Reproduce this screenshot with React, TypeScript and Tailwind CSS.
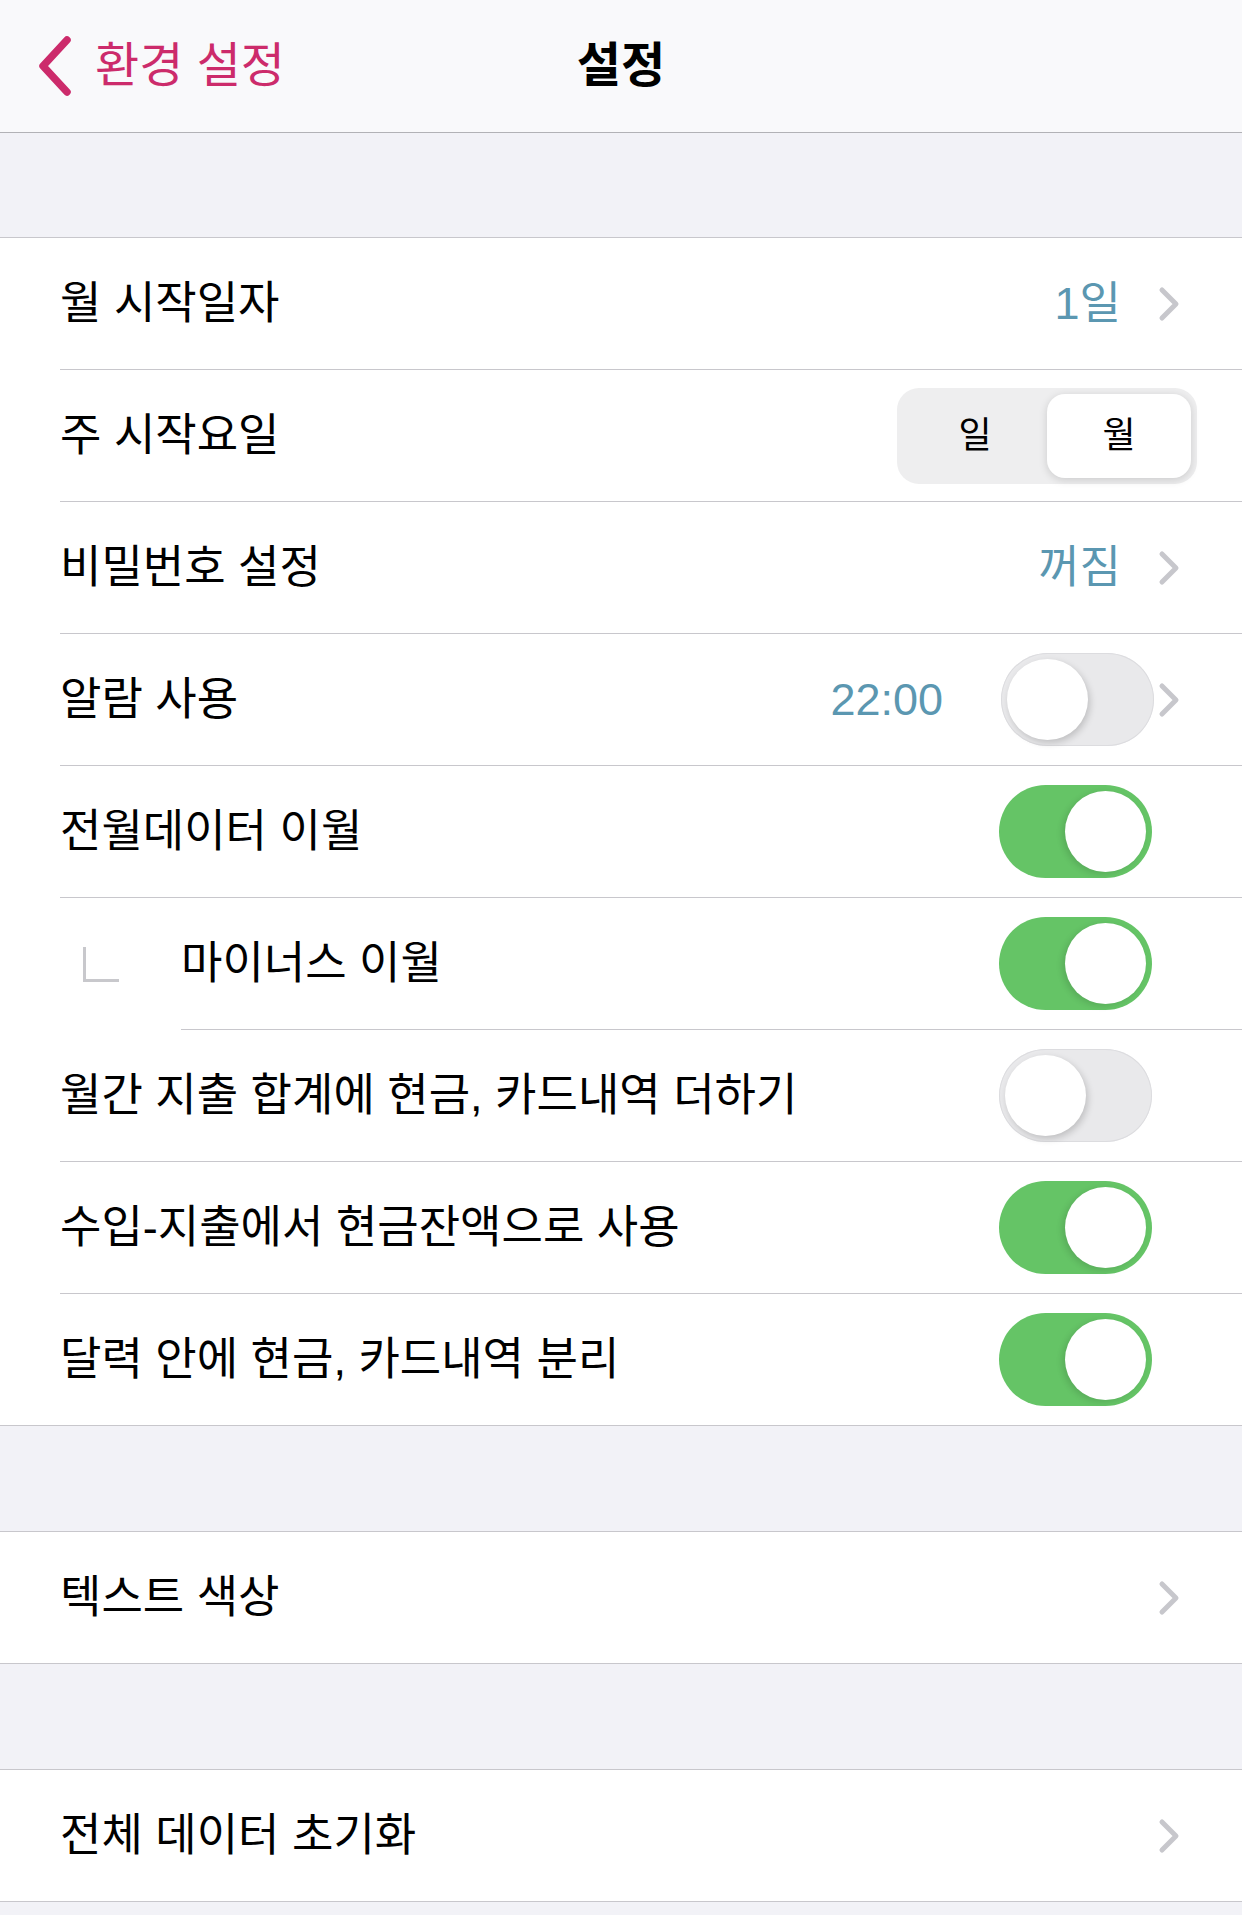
import React from 'react';

const FONT = { fontFamily: '"Liberation Sans", "Noto Sans CJK KR", sans-serif' };

const Chevron = () => (
	<svg width="22" height="36" viewBox="0 0 22 36" className="shrink-0">
		<path d="M4 4 L18 18 L4 32" fill="none" stroke="#c7c7cc" strokeWidth="5" strokeLinecap="round" strokeLinejoin="round" />
	</svg>
);

const Toggle = ({ on }: { on: boolean }) =>
	on ? (
		<div className="w-[153px] h-[93px] rounded-full bg-[#65c466] p-[6px] flex justify-end shrink-0">
			<div className="w-[81px] h-[81px] rounded-full bg-white shadow-[-3px_2px_6px_rgba(0,0,0,0.12)]" />
		</div>
	) : (
		<div className="w-[153px] h-[93px] rounded-full bg-[#e9e9eb] ring-1 ring-inset ring-[#dcdcdf] p-[6px] flex shrink-0">
			<div className="w-[81px] h-[81px] rounded-full bg-white shadow-[2px_3px_7px_rgba(0,0,0,0.18)]" />
		</div>
	);

const Value = ({ children }: { children: React.ReactNode }) => (
	<span className="text-[45px] text-[#5b97b1] leading-none">{children}</span>
);

interface RowProps {
	label: string;
	right?: React.ReactNode;
	last?: boolean;
	pr?: string;
}

const Row = ({ label, right, last, pr = 'pr-[62px]' }: RowProps) => (
	<div className="pl-[60px] bg-white">
		<div className={`flex items-center ${pr} ${last ? 'h-[131px]' : 'h-[132px] border-b border-[#c8c7cc]'}`}>
			<span className="flex-1 text-[45px] text-black leading-none">{label}</span>
			{right}
		</div>
	</div>
);

const Segmented = () => (
	<div className="w-[300px] h-[96px] rounded-[22px] bg-[#eeeeef] p-[6px] flex">
		<div className="flex-1 flex items-center justify-center text-[36px] text-black">일</div>
		<div className="flex-1 flex items-center justify-center text-[36px] text-black bg-white rounded-[18px] shadow-[0_2px_8px_rgba(0,0,0,0.15)]">
			월
		</div>
	</div>
);

export default function App() {
	return (
		<div className="w-[1242px] h-[1915px] bg-[#f2f2f7] overflow-hidden" style={FONT}>
			{/* nav bar */}
			<div className="h-[133px] bg-[#f9f9fb] border-b border-[#b2b2b6] grid grid-cols-3 items-center">
				<div className="flex items-center pl-[37px]">
					<svg width="36" height="60" viewBox="0 0 36 60">
						<path d="M30 4 L6 30 L30 56" fill="none" stroke="#cc2b6b" strokeWidth="7.5" strokeLinecap="round" strokeLinejoin="round" />
					</svg>
					<span className="ml-[22px] text-[48px] text-[#cc2b6b] leading-none">환경 설정</span>
				</div>
				<div className="text-center text-[48px] font-bold text-black leading-none">설정</div>
				<div />
			</div>

			<div className="h-[104px]" />

			<div className="border-y border-[#c8c7cc] bg-white">
				<Row
					label="월 시작일자"
					right={
						<div className="flex items-center gap-[37px]">
							<Value>1일</Value>
							<Chevron />
						</div>
					}
				/>
				<Row label="주 시작요일" pr="pr-[45px]" right={<Segmented />} />
				<Row
					label="비밀번호 설정"
					right={
						<div className="flex items-center gap-[37px]">
							<Value>꺼짐</Value>
							<Chevron />
						</div>
					}
				/>
				<Row
					label="알람 사용"
					right={
						<div className="flex items-center">
							<Value>22:00</Value>
							<div className="ml-[58px] mr-[4px]">
								<Toggle on={false} />
							</div>
							<Chevron />
						</div>
					}
				/>
				<Row label="전월데이터 이월" pr="pr-[90px]" right={<Toggle on />} />
				<div className="flex bg-white pl-[83px]">
					<div className="flex items-center h-[132px] w-[36px]">
						<div className="w-[36px] h-[35px] border-l-[3px] border-b-[3px] border-[#c8c8cc]" />
					</div>
					<div className="ml-[62px] flex-1 flex items-center h-[132px] pr-[90px] border-b border-[#c8c7cc]">
						<span className="flex-1 text-[45px] text-black leading-none">마이너스 이월</span>
						<Toggle on />
					</div>
				</div>
				<Row label="월간 지출 합계에 현금, 카드내역 더하기" pr="pr-[90px]" right={<Toggle on={false} />} />
				<Row label="수입-지출에서 현금잔액으로 사용" pr="pr-[90px]" right={<Toggle on />} />
				<Row label="달력 안에 현금, 카드내역 분리" pr="pr-[90px]" right={<Toggle on />} last />
			</div>

			<div className="h-[105px]" />

			<div className="border-y border-[#c8c7cc] bg-white">
				<Row label="텍스트 색상" right={<Chevron />} last />
			</div>

			<div className="h-[105px]" />

			<div className="border-y border-[#c8c7cc] bg-white">
				<Row label="전체 데이터 초기화" right={<Chevron />} last />
			</div>
		</div>
	);
}
